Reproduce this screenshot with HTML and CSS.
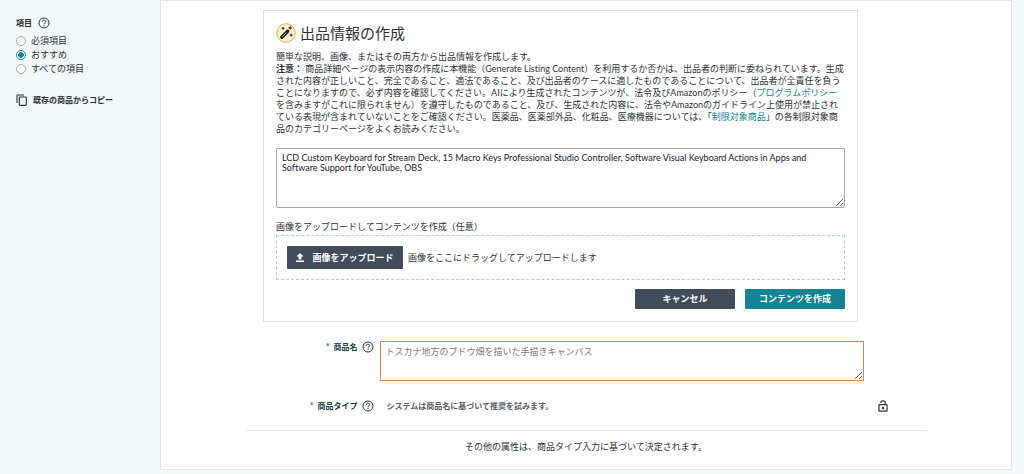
FILE: index.html
```html
<!DOCTYPE html>
<html lang="ja">
<head>
<meta charset="utf-8">
<meta name="viewport" content="width=device-width, initial-scale=1">
<title>出品情報の作成</title>
<link rel="stylesheet" href="styles.css">
</head>
<body>
<svg class="defs" aria-hidden="true">
  <symbol id="help" viewBox="0 0 12 12">
    <circle cx="6" cy="6" r="5" fill="none" stroke="currentColor" stroke-width="1"/>
    <path d="M4.3 4.9C4.3 3.8 5 3.2 6 3.2S7.7 3.8 7.7 4.7C7.7 5.8 6 5.8 6 7.2" fill="none" stroke="currentColor" stroke-width="1"/>
    <circle cx="6" cy="8.7" r=".65" fill="currentColor"/>
  </symbol>
</svg>
<div class="layout">
  <aside class="sidebar">
    <fieldset class="filter">
      <legend class="filter-title">項目 <svg class="help"><use href="#help"/></svg></legend>
      <label class="option"><input type="radio" name="items">必須項目</label>
      <label class="option"><input type="radio" name="items" checked>おすすめ</label>
      <label class="option"><input type="radio" name="items">すべての項目</label>
    </fieldset>
    <button type="button" class="copy">
      <svg class="copy-icon" viewBox="0 0 12 12" fill="none" stroke="currentColor" stroke-width="1.1"><path d="M1 9V1.6Q1 1 1.600 1H8"/><rect x="3.300" y="3" width="7" height="8.400" rx=".6"/></svg>
      既存の商品からコピー
    </button>
  </aside>
  <main class="main">
    <section class="card">
      <h1 class="title">
        <svg class="wand" viewBox="0 0 20 20"><circle cx="10" cy="10" r="9.300" fill="#fff0cb" stroke="#e3ad55" stroke-width="1"/><path d="M5.800 14.200L11.700 8.300" stroke="#17202a" stroke-width="3.400" stroke-linecap="round"/><path d="M6.500 13.500L10 10" stroke="#fff0cb" stroke-width=".7" stroke-linecap="round"/><path d="M7 3.900l.4 1 1 .4-1 .4-.4 1-.4-1-1-.4 1-.4zM14.200 3.200l.5 1.200 1.200.5-1.200.5-.5 1.200-.5-1.200-1.200-.5 1.200-.5zM15.200 10.700l.4 1 1 .4-1 .4-.4 1-.4-1-1-.4 1-.4z" fill="#17202a" stroke="#17202a" stroke-width=".5"/></svg>
        出品情報の作成
      </h1>
      <p class="text">簡単な説明、画像、またはその両方から出品情報を作成します。</p>
      <p class="text"><b>注意：</b> 商品詳細ページの表示内容の作成に本機能（Generate Listing Content）を利用するか否かは、出品者の判断に委ねられています。生成された内容が正しいこと、完全であること、適法であること、及び出品者のケースに適したものであることについて、出品者が全責任を負うことになりますので、必ず内容を確認してください。AIにより生成されたコンテンツが、法令及びAmazonのポリシー（<a href="#">プログラムポリシー</a>を含みますがこれに限られません）を遵守したものであること、及び、生成された内容に、法令やAmazonのガイドライン上使用が禁止されている表現が含まれていないことをご確認ください。医薬品、医薬部外品、化粧品、医療機器については、「<a href="#">制限対象商品</a>」の各制限対象商品のカテゴリーページをよくお読みください。</p>
      <textarea class="box description" aria-label="商品の説明">LCD Custom Keyboard for Stream Deck, 15 Macro Keys Professional Studio Controller, Software Visual Keyboard Actions in Apps and Software Support for YouTube, OBS</textarea>
      <p class="text upload-label" id="upload-label">画像をアップロードしてコンテンツを作成（任意）</p>
      <div class="drop" role="group" aria-labelledby="upload-label">
        <button type="button" class="button upload"><svg class="upload-icon" viewBox="0 0 8 9" fill="currentColor"><path d="M4 0L7.600 3.600H5.400V6.400H2.600V3.600H.4zM0 7.500H8V9H0z"/></svg>画像をアップロード</button>
        <span>画像をここにドラッグしてアップロードします</span>
      </div>
      <div class="actions">
        <button type="button" class="button">キャンセル</button>
        <button type="button" class="button primary">コンテンツを作成</button>
      </div>
    </section>
    <div class="row">
      <label class="label" for="name"><span class="star">*</span>商品名 <svg class="help"><use href="#help"/></svg></label>
      <textarea class="box name" id="name" placeholder="トスカナ地方のブドウ畑を描いた手描きキャンバス"></textarea>
    </div>
    <div class="row type-row">
      <div class="label"><span class="star">*</span>商品タイプ <svg class="help"><use href="#help"/></svg></div>
      <p class="hint">システムは商品名に基づいて推奨を試みます。</p>
      <svg class="lock" viewBox="0 0 10 12" fill="none" stroke="#2b3238" stroke-width="1.200"><rect x="1" y="4.600" width="8" height="6.600" rx=".5"/><path d="M2.800 3V2.600Q2.800.8 5 .8T7.200 2.600V4.600"/><circle cx="5" cy="7.900" r=".6" fill="#2b3238"/></svg>
    </div>
    <p class="footer">その他の属性は、商品タイプ入力に基づいて決定されます。</p>
  </main>
</div>
</body>
</html>
```
FILE: styles.css
```css
* { box-sizing: border-box; }
body, h1, p { margin: 0; }
body {
  background: #f3f8fa;
  color: #2b3238;
  font: 9px/12px Lato, "Noto Sans CJK JP", sans-serif;
  font-variant-ligatures: none;
}
button, textarea { font: inherit; font-variant-ligatures: none; }
a { color: #178492; text-decoration: none; }
.defs { display: none; }
.help { width: 12px; height: 12px; flex: none; }

.layout { display: flex; padding-right: 12px; }
.sidebar { width: 160px; flex: none; padding: 16px 0 0 16px; }
.main {
  flex: 1;
  background: #fff;
  border: 1px solid #e3e7e9;
  padding: 9px 0 16px;
}

.filter { border: 0; margin: 0; padding: 0; }
.filter-title {
  display: flex;
  align-items: center;
  gap: 6px;
  padding: 0;
  margin-bottom: 4px;
  font-size: 8px;
  font-weight: 700;
  line-height: 14px;
}
.option { display: flex; align-items: center; gap: 5px; height: 14px; }
.option input {
  appearance: none;
  width: 10px;
  height: 10px;
  margin: 0;
  border: 1px solid #a5aeb2;
  border-radius: 50%;
  background: #fff;
}
.option input:checked {
  border-color: #178492;
  background: radial-gradient(circle, #178492 46%, #fff 54%);
}
.copy {
  display: flex;
  align-items: center;
  gap: 5px;
  margin-top: 18px;
  padding: 0;
  border: 0;
  background: none;
  color: inherit;
  font-size: 8px;
  font-weight: 700;
}
.copy-icon { width: 12px; height: 12px; }

.card {
  width: 70%;
  margin-left: 12%;
  padding: 12px;
  border: 1px solid #dfe2e4;
}
.title {
  display: flex;
  align-items: center;
  gap: 4px;
  margin-bottom: 8px;
  font-size: 15px;
  font-weight: 400;
  line-height: 20px;
}
.wand { width: 20px; height: 20px; }
.box {
  display: block;
  width: 100%;
  padding: 4px 5px;
  border: 1px solid #a6a9ac;
  border-radius: 2px;
  background: #fff;
  color: #17202a;
  line-height: 10px;
}
.description { height: 60px; margin-top: 13px; }
.upload-label { margin-top: 13px; }
.drop {
  display: flex;
  align-items: center;
  gap: 5px;
  margin-top: 2px;
  padding: 10px;
  border: 1px dashed #a9d3cf;
}
.actions { display: flex; justify-content: flex-end; gap: 10px; margin-top: 9px; }
.button {
  width: 100px;
  height: 20px;
  padding: 0;
  border: 0;
  border-radius: 1px;
  background: #414c5b;
  color: #fff;
  font-weight: 700;
}
.primary { background: #148394; }
.upload {
  display: flex;
  align-items: center;
  justify-content: center;
  gap: 8px;
  width: 116px;
  height: 23px;
}
.upload-icon { width: 8px; height: 9px; }

.row {
  display: grid;
  grid-template-columns: 25% 57% auto;
  column-gap: 6px;
  margin-top: 19px;
}
.label {
  display: flex;
  justify-content: flex-end;
  gap: 4px;
  color: #173f3f;
  font-size: 8px;
  font-weight: 700;
}
.label .help { color: #2b3238; }
.star { color: #178492; font-size: 9px; font-weight: 900; }
.name { height: 40px; border-color: #c98a5c; border-radius: 0; }
.name::placeholder { color: #767b7e; opacity: 1; line-height: 12px; }
.type-row { align-items: center; }
.hint { padding-left: 7px; color: #5a6064; font-size: 8px; font-weight: 700; }
.lock { width: 10px; height: 12px; margin-left: 8px; }
.footer {
  margin: 18px 10% 0;
  padding-top: 10px;
  border-top: 1px solid #e0e3e4;
  text-align: center;
}
```
